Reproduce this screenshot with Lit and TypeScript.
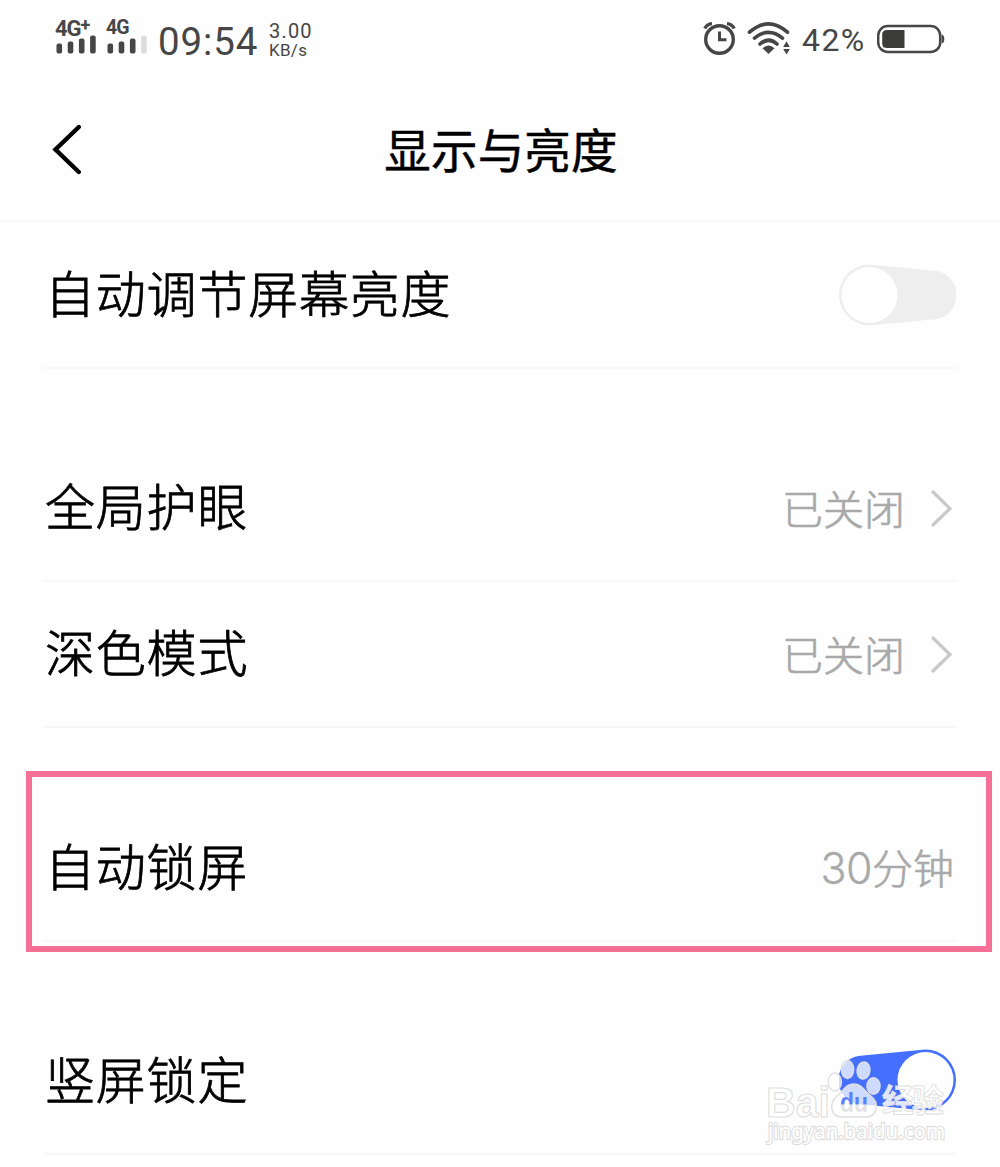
import { LitElement, html, svg, css, nothing } from "lit";
import { customElement, property } from "lit/decorators.js";

@customElement("status-bar")
class StatusBar extends LitElement {
  static styles = css`
    :host {
      display: flex;
      justify-content: space-between;
      height: 80px;
      box-sizing: border-box;
      padding: 0 55px;
      color: #464646;
      font-family: Roboto, "Noto Sans", sans-serif;
    }
    .group { display: flex; align-items: flex-start; }
    svg { display: block; }
    .sim { width: 42px; margin-right: 9px; padding-top: 19px; }
    .sim.second { width: 40px; margin-right: 12px; }
    .net {
      height: 16px;
      font: 700 22px/19px Roboto, sans-serif;
      letter-spacing: -1.1px;
      white-space: nowrap;
    }
    .second .net { font-size: 19.5px; line-height: 17px; letter-spacing: -0.9px; }
    .net sup { font-size: 18px; line-height: 0; vertical-align: 5px; }
    .time {
      width: 111px;
      padding-top: 18px;
      font: 400 38.5px/48px Roboto, sans-serif;
      letter-spacing: 0.9px;
      white-space: nowrap;
    }
    .rate { padding-top: 22px; font: 400 20px/19px Roboto, sans-serif; letter-spacing: 1.2px; }
    .unit { font-size: 17px; line-height: 18px; letter-spacing: 0.3px; }
    .alarm { margin: 21px 10px 0 0; }
    .wifi { margin: 21px 9px 0 0; }
    .percent {
      box-sizing: border-box;
      width: 77px;
      padding: 20px 0 0 2px;
      font: 400 32px/40px Roboto, sans-serif;
      letter-spacing: 1.4px;
      white-space: nowrap;
    }
    .battery { margin: 24px 0 0; }
  `;

  private bars(lit: number) {
    return html`<svg width="42" height="20" viewBox="0 0 42 20">
      ${[0, 1, 2, 3].map((i) => {
        const h = [10, 12, 15, 18][i];
        return svg`<rect x=${1.5 + i * 11.2} y=${18.5 - h} width="5.6" height=${h} rx="2" fill=${i < lit ? "#464646" : "#dcdcdc"} />`;
      })}
    </svg>`;
  }

  render() {
    return html`
      <div class="group">
        <div class="sim"><div class="net">4G<sup>+</sup></div>${this.bars(4)}</div>
        <div class="sim second"><div class="net">4G</div>${this.bars(3)}</div>
        <div class="time">09:54</div>
        <div class="rate"><div>3.00</div><div class="unit">KB/s</div></div>
      </div>
      <div class="group">
        <svg class="alarm" width="34" height="35" viewBox="0 0 34 35" fill="none" stroke="#464646">
          <circle cx="16.5" cy="18.5" r="13.8" stroke-width="3.4" />
          <path d="M16.5 10.5V18.8H23.5" stroke-width="3" />
          <path d="M1.8 7.5Q4 3 9 2.6M24 2.6Q29 3 31.2 7.5" stroke-width="3.4" />
        </svg>
        <svg class="wifi" width="44" height="35" viewBox="0 0 44 35" fill="none" stroke="#464646" stroke-width="3.6" stroke-linecap="round">
          <path d="M2.5 11.2Q21.5 -5.5 40.5 11.2M7.5 17.2Q21.5 5.5 35.5 17.2M13 23Q21.5 15.5 30 23" />
          <path d="M15.5 27.3Q21.5 21.5 27.5 27.3L21.5 33Z" fill="#464646" stroke="none" />
          <path d="M36.2 26L39.5 20.3L42.8 26ZM36.2 28L39.5 33.5L42.8 28Z" fill="#464646" stroke="none" />
        </svg>
        <div class="percent">42%</div>
        <svg class="battery" width="68" height="30" viewBox="0 0 68 30">
          <rect x="1.2" y="2" width="62" height="26" rx="9.5" fill="none" stroke="#464646" stroke-width="2.5" />
          <path d="M27.5 6V24H10Q5.2 24 5.2 19.5V10.5Q5.2 6 10 6Z" fill="#3c3c38" />
          <path d="M64.7 10.5Q67.3 11 67.3 15T64.7 19.5Z" fill="#464646" />
        </svg>
      </div>
    `;
  }
}

@customElement("toggle-switch")
class ToggleSwitch extends LitElement {
  @property({ type: Boolean }) on = false;
  static styles = css`
    :host { display: block; }
    svg { display: block; }
    .on { transform: scaleX(-1); }
  `;
  render() {
    const color = this.on ? "#456fff" : "#eeeeee";
    return html`<svg class=${this.on ? "on" : "off"} width="117" height="62" viewBox="0 0 117 62">
      <path fill=${color} d="M30.5 .5L33.5 .65L93 6.4A24.6 24.6 0 0 1 93 55.6L33.5 61.35L30.5 61.5A30.5 30.5 0 0 1 30.5 .5Z" />
      <circle cx="30.5" cy="31" r="28" fill="#fff" />
    </svg>`;
  }
}

@customElement("setting-row")
class SettingRow extends LitElement {
  @property() label = "";
  @property() value = "";
  @property() amount = "";
  @property({ type: Boolean }) arrow = false;
  static styles = css`
    :host {
      display: flex;
      justify-content: space-between;
      align-items: center;
      box-sizing: border-box;
      height: 147px;
      margin: 0 44px;
      border-bottom: 2px solid #f7f7f7;
    }
    .label {
      padding: 0 0 7px 1px;
      color: #000;
      font: 300 50px/70px "Noto Sans CJK SC", sans-serif;
      letter-spacing: 0.8px;
      -webkit-text-stroke: 0.8px #000;
    }
    .end { display: flex; align-items: center; }
    .value {
      padding-bottom: 1px;
      color: #a9a9a9;
      font: 300 41px/60px "Noto Sans CJK SC", sans-serif;
      -webkit-text-stroke: 0.7px #a9a9a9;
    }
    .value.last { margin-right: 2px; padding-bottom: 0; }
    .amount { font: 300 43px/60px Inter, sans-serif; letter-spacing: -0.5px; -webkit-text-stroke: 0.3px #a9a9a9; }
    svg { display: block; margin: 1px 3px 0 25px; }
  `;
  render() {
    return html`
      <div class="label">${this.label}</div>
      <div class="end">
        ${this.value
          ? html`<div class=${this.arrow ? "value" : "value last"}>${this.amount ? html`<span class="amount">${this.amount}</span>` : nothing}${this.value}</div>`
          : nothing}
        ${this.arrow
          ? html`<svg width="23" height="38" viewBox="0 0 23 38" fill="none" stroke="#c9c9c9" stroke-width="3.2" stroke-linecap="round">
              <path d="M3 3L20 19.5L3 36" />
            </svg>`
          : nothing}
        <slot></slot>
      </div>
    `;
  }
}

@customElement("site-watermark")
class SiteWatermark extends LitElement {
  static styles = css`
    :host { display: block; }
    svg { display: block; overflow: visible; }
    .mark { fill: #fff; stroke: #dfdfdf; stroke-width: 1.4; }
    .paw { fill-opacity: 0.74; }
    .latin { font: 700 43px "Liberation Sans", sans-serif; stroke-width: 1.2; }
    .cjk { font: 700 32px "Noto Sans CJK SC", sans-serif; fill-opacity: 0.85; stroke-width: 0.9; }
    .url { font: 400 21px "Noto Sans", sans-serif; stroke-width: 2.4; paint-order: stroke; }
    .du { font: 700 27px "Liberation Sans", sans-serif; }
  `;
  render() {
    return html`<svg width="184" height="90" viewBox="764 1056 184 90">
      <defs>
        <linearGradient id="du-ink" gradientUnits="userSpaceOnUse" x1="0" y1="1092" x2="0" y2="1112">
          <stop offset="0.58" stop-color="#5c80fa" />
          <stop offset="0.66" stop-color="#e3e3e3" />
        </linearGradient>
      </defs>
      <g class="mark">
        <text class="latin" x="766" y="1117" textLength="64" lengthAdjust="spacingAndGlyphs">Bai</text>
        <g class="paw">
          <ellipse cx="847.5" cy="1069.5" rx="6.2" ry="9" />
          <ellipse cx="863.5" cy="1070.5" rx="6.4" ry="8.6" transform="rotate(8 863.5 1070.5)" />
          <ellipse cx="834.8" cy="1082" rx="6.6" ry="9" />
          <ellipse cx="873.5" cy="1086" rx="6.6" ry="8.4" />
          <path d="M854 1084C862 1084 864 1091 871 1096C880 1103 877 1117 866 1117H842C831 1117 828 1104 837 1096C844 1091 845 1084 854 1084Z" />
        </g>
        <text class="cjk" x="882" y="1112" textLength="62">经验</text>
        <text class="url" x="768" y="1139" textLength="177" lengthAdjust="spacingAndGlyphs">jingyan.baidu.com</text>
      </g>
      <text class="du" x="840" y="1112" textLength="28" lengthAdjust="spacingAndGlyphs" fill="url(#du-ink)">du</text>
    </svg>`;
  }
}

@customElement("app-root")
class AppRoot extends LitElement {
  static styles = css`
    :host {
      display: block;
      position: relative;
      height: 1167px;
      overflow: hidden;
      background: #fefefe;
    }
    .header {
      display: grid;
      grid-template-columns: 1fr auto 1fr;
      align-items: center;
      box-sizing: border-box;
      height: 142px;
      padding: 0 52px;
      border-bottom: 2px solid #f7f7f7;
    }
    .header svg { display: block; }
    .title {
      margin: 0;
      padding: 0 0 4px 2px;
      color: #000;
      font: 400 46.5px/66px "Noto Sans CJK SC", sans-serif;
      letter-spacing: 0.2px;
      -webkit-text-stroke: 0.5px #000;
    }
    .list { display: flex; flex-direction: column; gap: 66.3px; }
    .second { margin-top: -1px; }
    .frame {
      position: absolute;
      left: 26px;
      top: 771px;
      width: 966px;
      height: 181px;
      box-sizing: border-box;
      border: 6px solid #f67096;
    }
    .watermark { position: absolute; left: 764px; top: 1056px; }
  `;
  render() {
    return html`
      <status-bar></status-bar>
      <div class="header">
        <svg width="30" height="52" viewBox="0 0 30 52" fill="none" stroke="#000" stroke-width="4.4" stroke-linecap="round">
          <path d="M26.8 3L3.5 25.5L26.8 48" />
        </svg>
        <h1 class="title">显示与亮度</h1>
      </div>
      <div class="list">
        <div><setting-row label="自动调节屏幕亮度"><toggle-switch></toggle-switch></setting-row></div>
        <div>
          <setting-row label="全局护眼" value="已关闭" arrow></setting-row>
          <setting-row class="second" label="深色模式" value="已关闭" arrow></setting-row>
        </div>
        <div><setting-row label="自动锁屏" amount="30" value="分钟"></setting-row></div>
        <div><setting-row label="竖屏锁定"><toggle-switch on></toggle-switch></setting-row></div>
      </div>
      <div class="frame"></div>
      <site-watermark class="watermark"></site-watermark>
    `;
  }
}
